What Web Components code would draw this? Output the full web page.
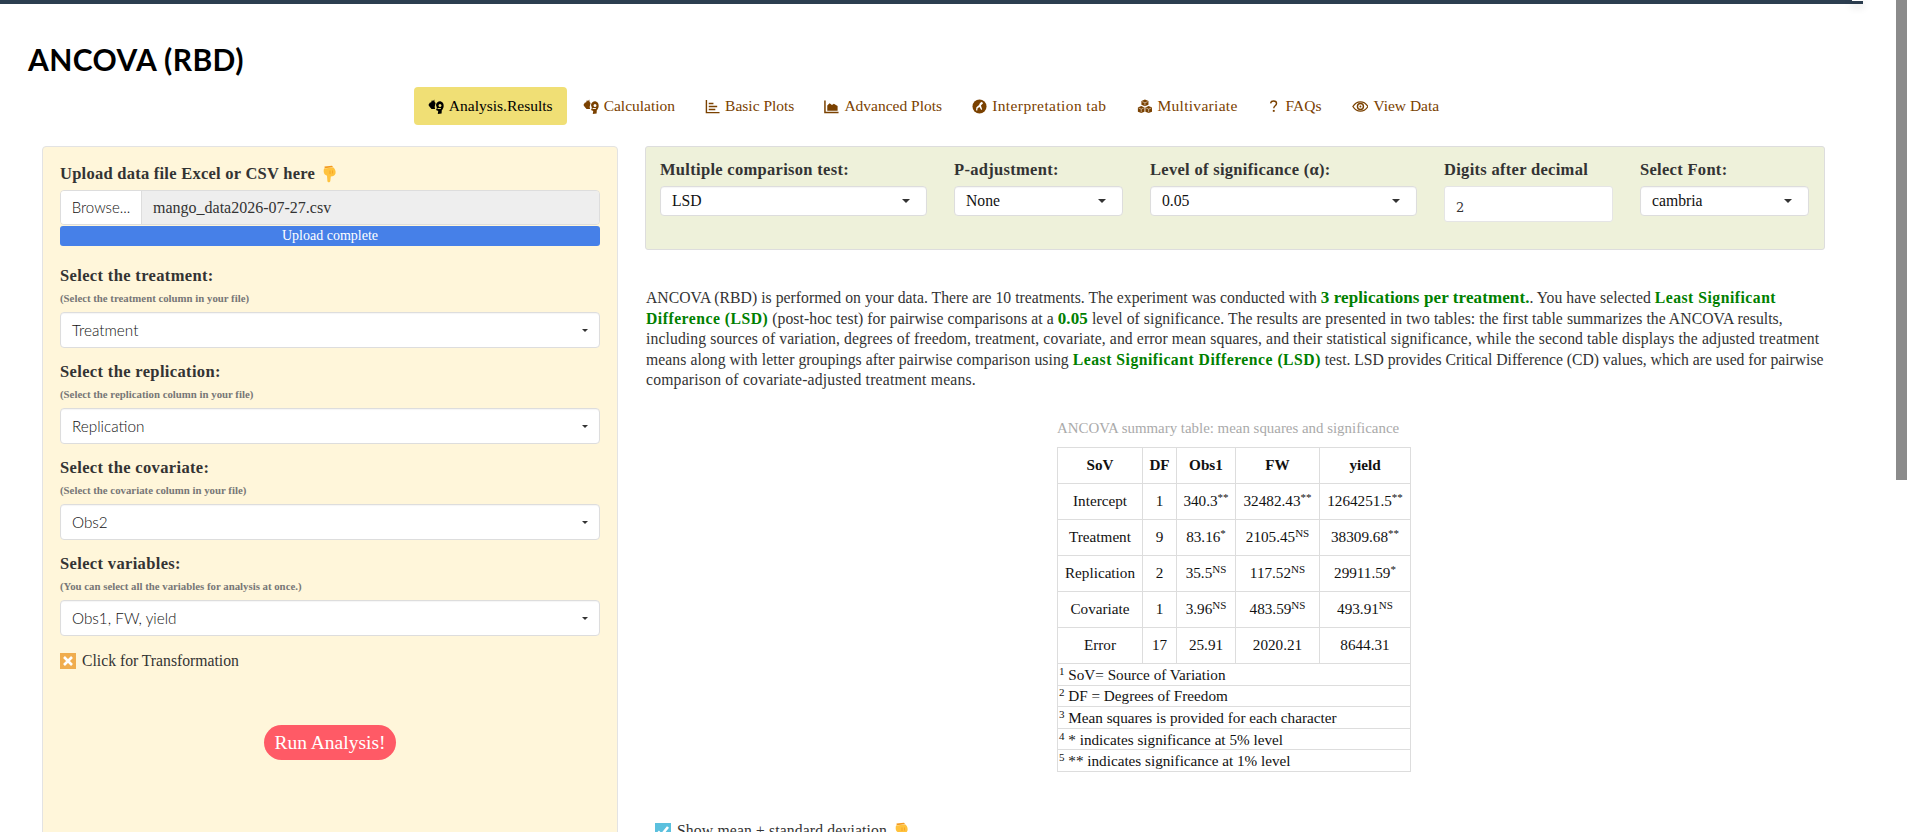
<!DOCTYPE html>
<html>
<head>
<meta charset="utf-8">
<title>ANCOVA (RBD)</title>
<style>
  html, body { margin: 0; height: 832px; overflow: hidden; background: #fff; }
  body { font-family: "Liberation Serif", serif; font-size: 16px; color: #333; }
</style>
</head>
<body>
<top-bar></top-bar>
<page-title>ANCOVA (RBD)</page-title>
<nav-tabs></nav-tabs>
<page-layout>
  <side-panel slot="side"></side-panel>
  <div slot="main">
    <options-panel></options-panel>
    <report-text></report-text>
    <ancova-table></ancova-table>
    <check-line kind="ok" style="margin:50px 0 0 10px">Show mean ± standard deviation</check-line>
  </div>
</page-layout>
<page-scrollbar></page-scrollbar>

<script>
const HAND = `<svg width="16" height="18" viewBox="0 0 16 18"><path d="M3.500 1.500 11 .8l1.200 1.500L3.700 3.200Z" fill="#f39a1f"/><path d="M3 3.500 12.500 2.500C14 4 15 6 14.500 8.500 14 10.500 12 11.500 9.800 11.500L9.300 16C9.100 17.800 6.500 17.800 6.400 16L6 10.800 3.800 9.500C2.500 8 2.500 5.500 3 3.500Z" fill="#ffc23d"/><path d="M9 5.500V9M11.500 5.500V8.500" stroke="#f39a1f" stroke-width=".7"/></svg>`;

const ICONS = {
  hands: `<svg style="width:16px" viewBox="0 0 18 15" preserveAspectRatio="none"><path d="M.5 6 2.500 3 3.200 4 4.500 1 5.500 2.200 7 .5 7.500 3 8.500 4 7.500 8 8 10H4L2 8Z"/><path d="M9 6C9.500 3 12 2 14 2.300 16.500 2.800 18 5 17.600 7.500 17.300 9.500 16.300 10.500 15.500 11.300L15.300 14.500 11 15 11.500 12 9 11 10 9Z"/><circle cx="13.500" cy="6.500" r="1.600" fill="var(--hole)"/><path d="M10.800 9.500h3.700" stroke="var(--hole)" stroke-width="1"/></svg>`,
  bars: `<svg viewBox="0 0 16 16"><path d="M1.500 1v13.500H15.500" fill="none" stroke="currentColor" stroke-width="1.500"/><path d="M4 4h5v1.500H4ZM4 7.300h9v1.500H4ZM4 10.500h7V12H4Z"/></svg>`,
  area: `<svg viewBox="0 0 16 16"><path d="M1 1.500v13h14.500" fill="none" stroke="currentColor" stroke-width="1.600"/><path d="M3.500 12.500V7L6 4.500 8.500 6.500 10.500 5 14.500 7.500V12.500Z"/></svg>`,
  compass: `<svg viewBox="0 0 16 16"><circle cx="8" cy="8" r="7.500"/><path d="M10.500 3 11.800 4.500 9.500 7 10.800 11 9.800 11.600 8 8.500 6 9.800 5.500 12.500 4.300 12 4.700 8.800 7.500 6.300 8.500 4.200Z" fill="#fff"/></svg>`,
  cubes: `<svg viewBox="0 0 18 17"><path d="M9 .5 13 2.200V6.600L9 8.300 5 6.600V2.200Z"/><path d="M4.800 8 8.500 9.700V14.400L4.800 16 1 14.400V9.700Z"/><path d="M13.200 8 17 9.700V14.400L13.200 16 9.500 14.400V9.700Z"/><path d="M5.800 3 9 4.300 12.200 3M9 4.300V7.500M1.800 10.200 4.800 11.500 7.700 10.200M4.800 11.500V15M10.300 10.200 13.200 11.500 16.200 10.200M13.200 11.500V15" fill="none" stroke="#fff" stroke-width=".6"/></svg>`,
  faq: `<svg viewBox="2 0 14 16" style="width:13px"><path d="M4.800 4.600C5 2.800 6.300 2 8 2c1.800 0 3.200 1 3.200 2.800 0 2.400-3 2.500-3 5" fill="none" stroke="currentColor" stroke-width="1.500"/><rect x="7.200" y="11.700" width="2" height="2"/></svg>`,
  eye: `<svg viewBox="0 0 18 16"><path d="M1 8C3 4.700 5.800 3 9 3s6 1.700 8 5c-2 3.300-4.800 5-8 5S3 11.300 1 8Z" fill="none" stroke="currentColor" stroke-width="1.400"/><circle cx="9" cy="8" r="3.200" fill="none" stroke="currentColor" stroke-width="1.500"/><circle cx="9" cy="8" r="1"/></svg>`
};

class TopBar extends HTMLElement {
  connectedCallback() {
    this.attachShadow({ mode: 'open' }).innerHTML = `
      <style>
        :host { display: block; height: 4px; margin-right: 44px; background: #2c3e50; position: relative; }
        i { position: absolute; right: 0; top: 0; width: 11px; height: 1px; background: #fff; box-shadow: 0 4px 8px 1px rgba(0,0,0,.2); }
      </style>
      <i></i>`;
  }
}

class PageTitle extends HTMLElement {
  connectedCallback() {
    this.attachShadow({ mode: 'open' }).innerHTML = `
      <style>
        :host { display: block; margin: 39px 0 0 28px; font: 700 30px/33px Lato, sans-serif; color: #000; letter-spacing: .42px; }
      </style>
      <slot></slot>`;
  }
}

class NavTabs extends HTMLElement {
  connectedCallback() {
    const tabs = [
      ['hands', 'Analysis.Results', 0, true], ['hands', 'Calculation', 0], ['bars', 'Basic Plots', 0], ['area', 'Advanced Plots', 0],
      ['compass', 'Interpretation tab', .4], ['cubes', 'Multivariate', .3], ['faq', 'FAQs', 0], ['eye', 'View Data', 0]
    ];
    this.attachShadow({ mode: 'open' }).innerHTML = `
      <style>
        :host { display: flex; justify-content: center; gap: 2px; margin: 11px 40px 21px 0; font-size: 15.500px; height: 38px; }
        a { display: flex; align-items: center; gap: 5px; padding: 0 14px; color: #7a4100; border-radius: 4px; --hole: #fff; white-space: nowrap; }
        a.on { background: #f0df75; color: #000; --hole: #f0df75; }
        svg { height: 15px; width: auto; fill: currentColor; display: block; }
      </style>
      ${tabs.map(t => `<a class="${t[3] ? 'on' : ''}">${ICONS[t[0]]}<span style="letter-spacing:${t[2]}px">${t[1]}</span></a>`).join('')}`;
  }
}

class PageLayout extends HTMLElement {
  connectedCallback() {
    this.attachShadow({ mode: 'open' }).innerHTML = `
      <style>
        :host { display: grid; grid-template-columns: 576px 1180px; column-gap: 27px; padding-left: 42px; align-items: start; }
      </style>
      <slot name="side"></slot><slot name="main"></slot>`;
  }
}

class SelectBox extends HTMLElement {
  connectedCallback() {
    this.attachShadow({ mode: 'open' }).innerHTML = `
      <style>
        :host { display: flex; align-items: center; justify-content: space-between; box-sizing: border-box; height: var(--h, 36px); padding: 0 var(--pr, 11px) 0 var(--pl, 11px);
          background: #fff; border: 1px solid #ddd; border-radius: 4px; color: #111; font: var(--f, 300 15.300px Lato, sans-serif); box-shadow: inset 0 1px 1px rgba(0,0,0,.04); }
        i { width: 0; height: 0; border: solid transparent; border-width: var(--c, 3px) var(--c, 3px) 0; border-top-color: #333; }
      </style>
      <span><slot></slot></span><i></i>`;
  }
}

class FieldGroup extends HTMLElement {
  connectedCallback() {
    this.attachShadow({ mode: 'open' }).innerHTML = `
      <style>
        :host { display: block; margin-bottom: 14px; }
        b { display: block; font: 700 16.500px/20px "Liberation Serif", serif; letter-spacing: .35px; color: #333; }
        small { display: block; margin: 5px 0 7px; font: 700 10.800px/14px "Liberation Serif", serif; color: #777; }
      </style>
      <b>${this.getAttribute('label')}</b>
      <small>${this.getAttribute('hint')}</small>
      <slot></slot>`;
  }
}

class FileUpload extends HTMLElement {
  connectedCallback() {
    this.attachShadow({ mode: 'open' }).innerHTML = `
      <style>
        :host { display: block; margin-bottom: 20px; }
        b { display: flex; align-items: center; gap: 6px; height: 20px; font: 700 16.500px/20px "Liberation Serif", serif; letter-spacing: .25px; color: #333; margin-bottom: 6px; }
        .row { display: grid; grid-template-columns: 81px 1fr; height: 35px; border: 1px solid #ddd; border-radius: 4px; box-sizing: border-box; overflow: hidden; }
        .btn { background: #fff; border-right: 1px solid #ddd; font: 300 15px/33px Lato, sans-serif; text-align: center; color: #111; }
        .name { background: #eee; padding-left: 11px; font-size: 16px; line-height: 33px; color: #333; }
        .bar { margin-top: 1px; height: 20px; background: #4680e8; border-radius: 3px; color: #fff; font-size: 14px; line-height: 20px; text-align: center; }
        svg { display: block; }
      </style>
      <b>Upload data file Excel or CSV here ${HAND}</b>
      <div class="row"><div class="btn">Browse...</div><div class="name">mango_data2026-07-27.csv</div></div>
      <div class="bar">Upload complete</div>`;
  }
}

class CheckLine extends HTMLElement {
  connectedCallback() {
    const ok = this.getAttribute('kind') === 'ok';
    this.attachShadow({ mode: 'open' }).innerHTML = `
      <style>
        :host { display: flex; align-items: center; gap: 6px; font-size: 15.700px; line-height: 16px; color: #333; ${ok ? 'letter-spacing: .15px;' : ''} }
        i { width: 16px; height: 16px; flex: none; background: ${ok ? '#5bc0de' : '#f0ad4e'}; display: block; }
        svg { display: block; }
      </style>
      <i><svg width="16" height="16" viewBox="0 0 16 16" fill="none" stroke="#fff" stroke-width="2.600">
        ${ok ? '<path d="M3 8.500 6.500 12 13 4"/>' : '<path d="M4 4 12 12M12 4 4 12"/>'}</svg></i>
      <span><slot></slot></span>${ok ? HAND : ''}`;
  }
}

class RunButton extends HTMLElement {
  connectedCallback() {
    this.attachShadow({ mode: 'open' }).innerHTML = `
      <style>
        :host { display: flex; align-items: center; justify-content: center; width: 132px; height: 35px; margin: 56px auto 0; border-radius: 18px; background: #ff5a66; color: #fff; font-size: 19.500px; }
      </style>
      <slot></slot>`;
  }
}

class SidePanel extends HTMLElement {
  connectedCallback() {
    this.attachShadow({ mode: 'open' }).innerHTML = `
      <style>
        :host { display: block; box-sizing: border-box; height: 720px; padding: 17px 17px 0; background: #fff6da; border: 1px solid #e3e3e3; border-radius: 4px; }
      </style>
      <file-upload></file-upload>
      <field-group label="Select the treatment:" hint="(Select the treatment column in your file)"><select-box>Treatment</select-box></field-group>
      <field-group label="Select the replication:" hint="(Select the replication column in your file)"><select-box>Replication</select-box></field-group>
      <field-group label="Select the covariate:" hint="(Select the covariate column in your file)"><select-box>Obs2</select-box></field-group>
      <field-group label="Select variables:" hint="(You can select all the variables for analysis at once.)"><select-box>Obs1, FW, yield</select-box></field-group>
      <check-line style="margin-top:17px">Click for Transformation</check-line>
      <run-button>Run Analysis!</run-button>`;
  }
}

class OptionsPanel extends HTMLElement {
  connectedCallback() {
    const cols = [['Multiple comparison test:', 'LSD'], ['P-adjustment:', 'None'], ['Level of significance (α):', '0.05'], ['Digits after decimal', null], ['Select Font:', 'cambria']];
    this.attachShadow({ mode: 'open' }).innerHTML = `
      <style>
        :host { display: grid; grid-template-columns: 267px 169px 267px 169px 169px; column-gap: 27px; box-sizing: border-box; height: 104px; padding: 13px 14px 0; background: #eef1da; border: 1px solid #ddd; border-radius: 3px; }
        b { display: block; font: 700 16.500px/20px "Liberation Serif", serif; letter-spacing: .3px; color: #333; margin-bottom: 6px; white-space: nowrap; }
        select-box { --h: 30px; --pl: 11px; --pr: 16px; --c: 4px; --f: 400 15.700px "Liberation Serif", serif; }
        .num { box-sizing: border-box; height: 36px; padding: 11px 0 0 11px; background: #fff; border: 1px solid #e5e5e5; border-radius: 3px; font: 400 13px/20px "DejaVu Serif", serif; color: #333; }
      </style>
      ${cols.map(c => `<div><b>${c[0]}</b>${c[1] === null ? '<div class="num">2</div>' : `<select-box>${c[1]}</select-box>`}</div>`).join('')}`;
  }
}

class ReportText extends HTMLElement {
  connectedCallback() {
    this.attachShadow({ mode: 'open' }).innerHTML = `
      <style>
        :host { display: block; margin-top: 38px; padding-left: 1px; font-size: 15.700px; line-height: 20.600px; color: #333; white-space: nowrap; }
        b { color: #008000; letter-spacing: .5px; }
        b.big { font-size: 17px; letter-spacing: .1px; }
      </style>
      <span style="letter-spacing:.03px">ANCOVA (RBD) is performed on your data. There are 10 treatments. The experiment was conducted with <b class="big">3 replications per treatment.</b>. You have selected <b>Least Significant</b></span><br>
      <span style="letter-spacing:.06px"><b>Difference (LSD)</b> (post-hoc test) for pairwise comparisons at a <b class="big">0.05</b> level of significance. The results are presented in two tables: the first table summarizes the ANCOVA results,</span><br>
      <span style="letter-spacing:.105px">including sources of variation, degrees of freedom, treatment, covariate, and error mean squares, and their statistical significance, while the second table displays the adjusted treatment</span><br>
      <span style="letter-spacing:.07px">means along with letter groupings after pairwise comparison using </span><b>Least Significant Difference (LSD)</b><span style="letter-spacing:-.02px"> test. LSD provides Critical Difference (CD) values, which are used for pairwise</span><br>
      <span style="letter-spacing:.2px">comparison of covariate-adjusted treatment means.</span>`;
  }
}

class AncovaTable extends HTMLElement {
  connectedCallback() {
    const rows = [
      ['Intercept', '1', '340.3', '**', '32482.43', '**', '1264251.5', '**'],
      ['Treatment', '9', '83.16', '*', '2105.45', 'NS', '38309.68', '**'],
      ['Replication', '2', '35.5', 'NS', '117.52', 'NS', '29911.59', '*'],
      ['Covariate', '1', '3.96', 'NS', '483.59', 'NS', '493.91', 'NS'],
      ['Error', '17', '25.91', '', '2020.21', '', '8644.31', '']
    ];
    const notes = ['SoV= Source of Variation', 'DF = Degrees of Freedom', 'Mean squares is provided for each character', '* indicates significance at 5% level', '** indicates significance at 1% level'];
    this.attachShadow({ mode: 'open' }).innerHTML = `
      <style>
        :host { display: block; width: 353px; margin: 28px 0 0 412px; font-size: 15.200px; color: #111; }
        .cap { height: 19px; margin-bottom: 9px; font-size: 14.900px; line-height: 19px; color: #aaa; white-space: nowrap; }
        table { width: 353px; table-layout: fixed; border-collapse: collapse; }
        th, td { border: 1px solid #ddd; height: 35px; padding: 0; text-align: center; }
        th { font-weight: 700; }
        td.note { height: 20.600px; text-align: left; padding-left: 1px; line-height: 15px; }
        sup { font-size: 11px; line-height: 0; vertical-align: 5px; }
      </style>
      <div class="cap">ANCOVA summary table: mean squares and significance</div>
      <table>
        <colgroup><col style="width:85px"><col style="width:34px"><col style="width:59px"><col style="width:84px"><col style="width:91px"></colgroup>
        <tr><th>SoV</th><th>DF</th><th>Obs1</th><th>FW</th><th>yield</th></tr>
        ${rows.map(r => `<tr><td>${r[0]}</td><td>${r[1]}</td><td>${r[2]}<sup>${r[3]}</sup></td><td>${r[4]}<sup>${r[5]}</sup></td><td>${r[6]}<sup>${r[7]}</sup></td></tr>`).join('')}
        ${notes.map((n, i) => `<tr><td class="note" colspan="5"><sup>${i + 1}</sup> ${n}</td></tr>`).join('')}
      </table>`;
  }
}

class PageScrollbar extends HTMLElement {
  connectedCallback() {
    this.attachShadow({ mode: 'open' }).innerHTML = `
      <style>
        :host { position: fixed; top: 0; right: 0; width: 11px; height: 832px; background: #fff; }
        i { display: block; height: 480px; background: #8b8b8b; }
      </style>
      <i></i>`;
  }
}

customElements.define('top-bar', TopBar);
customElements.define('page-title', PageTitle);
customElements.define('nav-tabs', NavTabs);
customElements.define('page-layout', PageLayout);
customElements.define('select-box', SelectBox);
customElements.define('field-group', FieldGroup);
customElements.define('file-upload', FileUpload);
customElements.define('check-line', CheckLine);
customElements.define('run-button', RunButton);
customElements.define('side-panel', SidePanel);
customElements.define('options-panel', OptionsPanel);
customElements.define('report-text', ReportText);
customElements.define('ancova-table', AncovaTable);
customElements.define('page-scrollbar', PageScrollbar);
</script>
</body>
</html>
